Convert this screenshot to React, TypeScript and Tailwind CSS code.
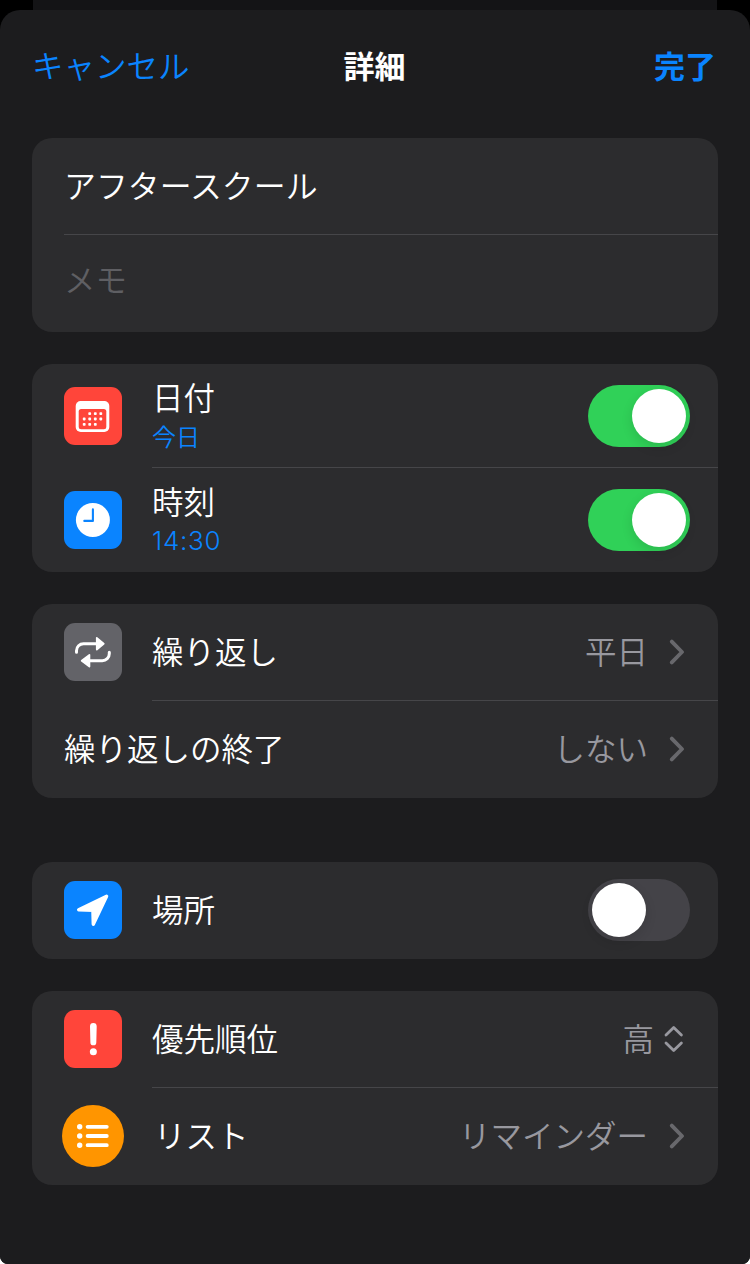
import type { ReactNode } from 'react';

function Card({ children, className = '' }: { children: ReactNode; className?: string }) {
  return <section className={`flex flex-col overflow-hidden rounded-[20px] bg-[#2c2c2e] ${className}`}>{children}</section>;
}

function Divider({ inset = 'ml-[120px]' }: { inset?: string }) {
  return <div className={`h-px shrink-0 bg-[#464649] ${inset}`} />;
}

function Tile({ color, children }: { color: string; children: ReactNode }) {
  return (
    <div className={`size-[58px] shrink-0 rounded-[11px] ${color}`}>
      <svg viewBox="0 0 58 58" className="size-full" fill="none">
        {children}
      </svg>
    </div>
  );
}

function Toggle({ on }: { on: boolean }) {
  return (
    <button
      role="switch"
      aria-checked={on}
      className={`flex h-[62px] w-[102px] shrink-0 items-center rounded-full p-1 ${on ? 'justify-end bg-[#30d158]' : 'justify-start bg-[#444348]'}`}
    >
      <span className="size-[54px] rounded-full bg-white shadow-[0_4px_12px_rgba(0,0,0,0.12)]" />
    </button>
  );
}

function Chevron() {
  return (
    <svg viewBox="0 0 16 26" className="ml-[21px] h-[26px] w-4 shrink-0" fill="none" stroke="#68686c" strokeWidth="3.8" strokeLinecap="round" strokeLinejoin="round">
      <path d="M2.8 2.6 13 13 2.8 23.4" />
    </svg>
  );
}

const CALENDAR_DOTS = [
  [25.7, 26.7], [31.3, 26.7], [36.8, 26.7],
  [20.2, 32], [25.7, 32], [31.3, 32], [36.8, 32],
  [20.2, 37.4], [25.7, 37.4], [31.3, 37.4],
];

export default function App() {
  return (
    <div className="h-[1264px] w-[750px] overflow-hidden bg-white font-['Noto_Sans_CJK_JP_DemiLight','Noto_Sans_CJK_JP',sans-serif] text-[31.5px] font-[350] text-white">
      <div className="flex h-full flex-col rounded-b-[8px] bg-black">
        <div className="mx-[33px] h-[10px] shrink-0 bg-[#141416]" />
        <main className="flex grow flex-col rounded-t-[20px] rounded-b-[8px] bg-[#1c1c1e] px-8">
          <header className="grid h-[112px] grid-cols-3 items-center pb-[3px] leading-[48px] text-[#0a84ff]">
            <button className="justify-self-start pb-px">キャンセル</button>
            <h1 className="justify-self-center pr-px font-['Noto_Sans_CJK_JP',sans-serif] text-[31px] font-bold text-white">詳細</h1>
            <button className="justify-self-end pr-[2px] font-['Noto_Sans_CJK_JP',sans-serif] text-[31px] font-bold">完了</button>
          </header>

          <Card className="mt-4 h-[194px]">
            <div className="flex h-24 items-center pb-[3px] pl-8 text-[31.9px]">アフタースクール</div>
            <Divider inset="ml-8" />
            <div className="flex h-[97px] items-center pb-[9px] pl-8 text-[#5f5f63]">メモ</div>
          </Card>

          <Card className="mt-8 h-[208px]">
            <div className="flex h-[103px] items-center pr-7 pl-8">
              <Tile color="bg-[#ff453a]">
                <rect x="11.7" y="14" width="33.6" height="31" rx="5" fill="#fff" />
                <rect x="14.7" y="21.9" width="27.6" height="20.4" rx="2.5" fill="#ff453a" />
                {CALENDAR_DOTS.map(([x, y]) => (
                  <rect key={`${x}-${y}`} x={x - 1.4} y={y - 1.4} width="2.8" height="2.8" rx="0.8" fill="#fff" />
                ))}
              </Tile>
              <div className="ml-[30px] grow pb-[2px]">
                <div className="leading-10">日付</div>
                <div className="pt-[2px] text-[24px] leading-9 text-[#0a84ff]">今日</div>
              </div>
              <Toggle on />
            </div>
            <Divider />
            <div className="flex h-[104px] items-center pr-7 pl-8">
              <Tile color="bg-[#0a84ff]">
                <circle cx="28.9" cy="29" r="17" fill="#fff" />
                <path d="M28.9 18.4V29.9H20.3" stroke="#0a84ff" strokeWidth="2.1" strokeLinecap="round" strokeLinejoin="round" />
              </Tile>
              <div className="ml-[30px] grow">
                <div className="leading-[38px]">時刻</div>
                <div className="pt-[4px] font-['Inter',sans-serif] text-[26px] leading-9 font-[350] tracking-[0.7px] text-[#0a84ff]">14:30</div>
              </div>
              <Toggle on />
            </div>
          </Card>

          <Card className="mt-8 h-[194px]">
            <div className="flex h-24 items-center pr-[33px] pl-8">
              <Tile color="bg-[#636368]">
                <path d="M12.5 29.2v-1.5a7 7 0 0 1 7-7H33M45.3 29.2v1.5a7 7 0 0 1-7 7H25" stroke="#fff" strokeWidth="3" strokeLinecap="round" />
                <path d="M32.8 14.9v11.6l6.9-5.8ZM25.4 31.9v11.6l-7.7-5.8Z" fill="#fff" stroke="#fff" strokeWidth="1.8" strokeLinejoin="round" />
              </Tile>
              <span className="ml-[30px] grow pb-[3px]">繰り返し</span>
              <span className="pb-[3px] text-[#98989f]">平日</span>
              <Chevron />
            </div>
            <Divider />
            <div className="flex h-24 items-center pr-[33px] pl-8">
              <span className="grow pb-[3px]">繰り返しの終了</span>
              <span className="pb-[3px] text-[#98989f]">しない</span>
              <Chevron />
            </div>
          </Card>

          <Card className="mt-16 h-[97px]">
            <div className="flex h-24 items-center pr-7 pl-8">
              <Tile color="bg-[#0a84ff]">
                <path d="M42.6 15.3 14.7 28.8 28.9 29.2 29.3 43.3Z" fill="#fff" stroke="#fff" strokeWidth="3.4" strokeLinejoin="round" />
              </Tile>
              <span className="ml-[30px] grow pb-[3px]">場所</span>
              <Toggle on={false} />
            </div>
          </Card>

          <Card className="mt-8 h-[194px]">
            <div className="flex h-24 items-center pr-[34px] pl-8">
              <Tile color="bg-[#ff453a]">
                <path d="M26 16.4a3.35 3.35 0 0 1 6.7 0L32.3 32.4a2.95 2.95 0 0 1-5.9 0Z" fill="#fff" />
                <circle cx="29.35" cy="41.7" r="3.5" fill="#fff" />
              </Tile>
              <span className="ml-[30px] grow pb-[3px]">優先順位</span>
              <span className="pb-[3px] text-[#98989f]">高</span>
              <svg viewBox="0 0 20 28" className="ml-[10px] h-7 w-5 shrink-0" fill="none" stroke="#98989f" strokeWidth="2.8" strokeLinecap="round" strokeLinejoin="round">
                <path d="m2 10 7.7-7.6L17.4 10M2 18l7.7 7.6 7.7-7.6" />
              </svg>
            </div>
            <Divider />
            <div className="flex h-24 items-center pr-[33px] pl-[30px]">
              <div className="size-[62px] shrink-0 rounded-full bg-[#ff9500]">
                <svg viewBox="0 0 62 62" className="size-full" stroke="#fff" strokeWidth="3.8" strokeLinecap="round">
                  <path d="M25.6 21.8h19.2M25.6 31h19.2M25.6 40.2h19.2" />
                  <path d="M17.7 21.8h0.01M17.7 31h0.01M17.7 40.2h0.01" strokeWidth="5.4" />
                </svg>
              </div>
              <span className="ml-[30px] grow pb-[3px]">リスト</span>
              <span className="pb-[3px] text-[#98989f]">リマインダー</span>
              <Chevron />
            </div>
          </Card>
        </main>
      </div>
    </div>
  );
}
